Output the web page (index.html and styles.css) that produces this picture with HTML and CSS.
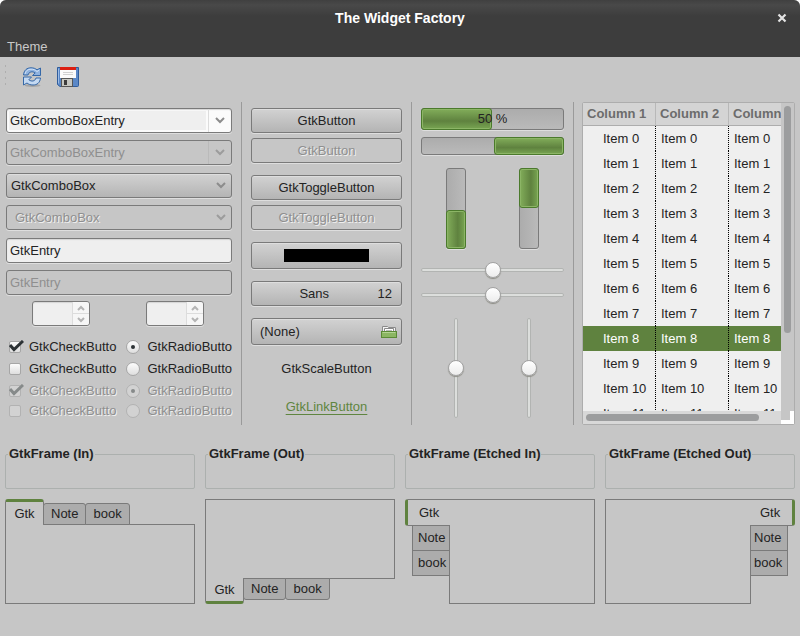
FILE: index.html
```html
<!DOCTYPE html>
<html lang="en">
<head>
<meta charset="utf-8">
<title>The Widget Factory</title>
<link rel="stylesheet" href="styles.css">
</head>
<body>
<div class="window">
  <header class="titlebar">
    <h1 class="title">The Widget Factory</h1>
    <button class="close" aria-label="Close"><svg width="10" height="10" viewBox="0 0 10 10"><path d="M1.500 1.500l7 7M8.500 1.500l-7 7" stroke="#e4e4e4" stroke-width="2.200" fill="none"/></svg></button>
  </header>
  <nav class="menubar"><button class="menu">Theme</button></nav>
  <div class="toolbar">
    <span class="grip"></span>
    <button class="tool" aria-label="Refresh">
      <svg width="24" height="24" viewBox="0 0 24 24">
        <ellipse cx="12.500" cy="20.500" rx="8" ry="1.500" fill="#a5a5a5"/>
        <path d="M3.500 10C4 5 7 2.800 11 2.800c2.600 0 4.400.7 6 2L20.500 3v7.500h-8l2.700-2.600C12.500 6 9 6.500 8 10z" fill="#8fb2df" stroke="#3568a8" stroke-linejoin="round"/>
        <path d="M20.500 13c-.5 4.800-3.500 7-7.500 7-2.600 0-4.400-.7-6-2l-3.500 2v-8h8L8.800 14.800C11.500 16.800 15 16.500 16 13z" fill="#c4d9f2" stroke="#3568a8" stroke-linejoin="round"/>
        <path d="M5 9C6 5.500 8 4.200 11 4.200c2.500 0 4.200.7 6 2.300l2-1.200" fill="none" stroke="#d3e3f6"/>
      </svg>
    </button>
    <button class="tool" aria-label="Save">
      <svg width="24" height="24" viewBox="0 0 24 24">
        <path d="M1.500 2.500h21v18q0 1-1 1H4l-2.500-2z" fill="#5b88c7" stroke="#2f5c9c"/>
        <path d="M2.500 3.500v15" stroke="#9bbbe5"/>
        <rect x="4" y="2" width="16" height="11" fill="#fafafa"/>
        <rect x="4" y="2" width="16" height="3" fill="#dc1f12"/>
        <path d="M7 7.500h10M7 9.500h10" stroke="#d0d0d0"/>
        <rect x="5.500" y="13.500" width="11" height="8" fill="#c6c7c2" stroke="#565656"/>
        <rect x="8" y="15" width="3" height="5" fill="#3c3c3c"/>
      </svg>
    </button>
  </div>

  <main class="widgets">
    <section class="col entries">
      <div class="pair">
        <div class="comboentry">
          <input class="comboentry-text" type="text" value="GtkComboBoxEntry" aria-label="Combo entry">
          <button class="comboentry-drop" aria-label="Open list"><svg class="chev" width="10" height="7" viewBox="0 0 10 7"><path d="M1 1l4 4 4-4"/></svg></button>
        </div>
        <div class="comboentry off">
          <input class="comboentry-text" type="text" value="GtkComboBoxEntry" aria-label="Disabled combo entry" disabled>
          <button class="comboentry-drop" aria-label="Open list" disabled><svg class="chev" width="10" height="7" viewBox="0 0 10 7"><path d="M1 1l4 4 4-4"/></svg></button>
        </div>
      </div>
      <div class="pair">
        <div class="combo">
          <select class="btn combo-select" aria-label="Combo box"><option>GtkComboBox</option></select>
          <svg class="chev combo-chev" width="10" height="7" viewBox="0 0 10 7"><path d="M1 1l4 4 4-4"/></svg>
        </div>
        <div class="combo off">
          <select class="btn combo-select" aria-label="Disabled combo box" disabled><option>GtkComboBox</option></select>
          <svg class="chev combo-chev" width="10" height="7" viewBox="0 0 10 7"><path d="M1 1l4 4 4-4"/></svg>
        </div>
      </div>
      <div class="pair">
        <input class="entry" type="text" value="GtkEntry" aria-label="Entry">
        <input class="entry" type="text" value="GtkEntry" aria-label="Disabled entry" disabled>
      </div>
      <div class="spins">
        <div class="spin">
          <input class="spin-text" type="text" aria-label="First number">
          <span class="spin-btns">
            <button class="spin-btn" aria-label="Increase"><svg class="chev" width="8" height="6" viewBox="0 0 8 6"><path d="M1 5l3-3 3 3"/></svg></button>
            <button class="spin-btn" aria-label="Decrease"><svg class="chev" width="8" height="6" viewBox="0 0 8 6"><path d="M1 1l3 3 3-3"/></svg></button>
          </span>
        </div>
        <div class="spin">
          <input class="spin-text" type="text" aria-label="Second number">
          <span class="spin-btns">
            <button class="spin-btn" aria-label="Increase"><svg class="chev" width="8" height="6" viewBox="0 0 8 6"><path d="M1 5l3-3 3 3"/></svg></button>
            <button class="spin-btn" aria-label="Decrease"><svg class="chev" width="8" height="6" viewBox="0 0 8 6"><path d="M1 1l3 3 3-3"/></svg></button>
          </span>
        </div>
      </div>
      <div class="choices">
        <label class="choice"><span class="mark"><input class="check" type="checkbox" checked><svg class="tick" width="15" height="12" viewBox="0 0 15 12"><path d="M1 5l4 4.500L14 1"/></svg></span><span>GtkCheckButto</span></label>
        <label class="choice"><span class="mark"><input class="radio" type="radio" name="r1" checked></span><span>GtkRadioButto</span></label>
        <label class="choice"><span class="mark"><input class="check" type="checkbox"></span><span>GtkCheckButto</span></label>
        <label class="choice"><span class="mark"><input class="radio" type="radio" name="r1"></span><span>GtkRadioButto</span></label>
        <label class="choice off"><span class="mark"><input class="check" type="checkbox" checked disabled><svg class="tick" width="15" height="12" viewBox="0 0 15 12"><path d="M1 5l4 4.500L14 1"/></svg></span><span>GtkCheckButto</span></label>
        <label class="choice off"><span class="mark"><input class="radio" type="radio" name="r2" checked disabled></span><span>GtkRadioButto</span></label>
        <label class="choice off"><span class="mark"><input class="check" type="checkbox" disabled></span><span>GtkCheckButto</span></label>
        <label class="choice off"><span class="mark"><input class="radio" type="radio" name="r2" disabled></span><span>GtkRadioButto</span></label>
      </div>
    </section>
    <div class="sep"></div>
    <section class="col buttons">
      <div class="stack">
        <button class="btn">GtkButton</button>
        <button class="btn" disabled>GtkButton</button>
      </div>
      <div class="stack">
        <button class="btn">GtkToggleButton</button>
        <button class="btn" disabled>GtkToggleButton</button>
      </div>
      <button class="btn tall" aria-label="Pick a color"><span class="swatch"></span></button>
      <button class="btn font-btn"><span class="font-name">Sans</span><span>12</span></button>
      <button class="btn tall file-btn"><span>(None)</span>
        <svg width="16" height="14" viewBox="0 0 16 14">
          <path d="M1.500 7V1.500h5l1 1h7V7" fill="#f4f4f4" stroke="#8a8a8a"/>
          <path d="M3.500 7V3.500h9V7" fill="#fff" stroke="#8a8a8a"/>
          <path d="M5 5.500h6" stroke="#bbb"/>
          <rect x=".5" y="6.500" width="15" height="6" fill="#8cb663" stroke="#5b8a36"/>
          <path d="M1.500 7.500h13" stroke="#b4d394"/>
        </svg>
      </button>
      <button class="flat">GtkScaleButton</button>
      <a class="link" href="#">GtkLinkButton</a>
    </section>
    <div class="sep"></div>
    <section class="col meters">
      <div class="bar" role="progressbar" aria-valuenow="50" aria-label="Progress"><span class="fill"></span><span class="bar-text">50 %</span></div>
      <div class="bar slim reverse" role="progressbar" aria-valuenow="50" aria-label="Reverse progress"><span class="fill"></span></div>
      <div class="vbars">
        <div class="bar vert reverse" role="progressbar" aria-valuenow="50" aria-label="Upward progress"><span class="fill"></span></div>
        <div class="bar vert" role="progressbar" aria-valuenow="50" aria-label="Downward progress"><span class="fill"></span></div>
      </div>
      <div class="hscales">
        <input class="scale" type="range" aria-label="Horizontal scale">
        <input class="scale" type="range" aria-label="Inverted horizontal scale">
      </div>
      <div class="vscales">
        <input class="scale vscale" type="range" aria-label="Vertical scale">
        <input class="scale vscale" type="range" aria-label="Inverted vertical scale">
      </div>
    </section>
    <div class="sep"></div>
    <section class="tree">
      <div class="view">
        <table class="items">
          <thead><tr><th>Column 1</th><th>Column 2</th><th>Column 3</th></tr></thead>
          <tbody>
            <tr><td>Item 0</td><td>Item 0</td><td>Item 0</td></tr>
            <tr><td>Item 1</td><td>Item 1</td><td>Item 1</td></tr>
            <tr><td>Item 2</td><td>Item 2</td><td>Item 2</td></tr>
            <tr><td>Item 3</td><td>Item 3</td><td>Item 3</td></tr>
            <tr><td>Item 4</td><td>Item 4</td><td>Item 4</td></tr>
            <tr><td>Item 5</td><td>Item 5</td><td>Item 5</td></tr>
            <tr><td>Item 6</td><td>Item 6</td><td>Item 6</td></tr>
            <tr><td>Item 7</td><td>Item 7</td><td>Item 7</td></tr>
            <tr class="selected"><td>Item 8</td><td>Item 8</td><td>Item 8</td></tr>
            <tr><td>Item 9</td><td>Item 9</td><td>Item 9</td></tr>
            <tr><td>Item 10</td><td>Item 10</td><td>Item 10</td></tr>
            <tr><td>Item 11</td><td>Item 11</td><td>Item 11</td></tr>
          </tbody>
        </table>
      </div>
      <div class="vtrack"><span class="vthumb"></span></div>
      <div class="htrack"><span class="hthumb"></span></div>
      <div class="corner"></div>
    </section>
  </main>

  <section class="frames">
    <fieldset class="frame"><legend>GtkFrame (In)</legend></fieldset>
    <fieldset class="frame"><legend>GtkFrame (Out)</legend></fieldset>
    <fieldset class="frame"><legend>GtkFrame (Etched In)</legend></fieldset>
    <fieldset class="frame"><legend>GtkFrame (Etched Out)</legend></fieldset>
  </section>

  <section class="books">
    <div class="book top">
      <div class="tabs" role="tablist"><button class="tab active" role="tab">Gtk</button><button class="tab" role="tab">Note</button><button class="tab" role="tab">book</button></div>
      <div class="page"></div>
    </div>
    <div class="book bottom">
      <div class="tabs" role="tablist"><button class="tab active" role="tab">Gtk</button><button class="tab" role="tab">Note</button><button class="tab" role="tab">book</button></div>
      <div class="page"></div>
    </div>
    <div class="book left">
      <div class="tabs" role="tablist"><button class="tab active" role="tab">Gtk</button><button class="tab" role="tab">Note</button><button class="tab" role="tab">book</button></div>
      <div class="page"></div>
    </div>
    <div class="book right">
      <div class="tabs" role="tablist"><button class="tab active" role="tab">Gtk</button><button class="tab" role="tab">Note</button><button class="tab" role="tab">book</button></div>
      <div class="page"></div>
    </div>
  </section>
</div>
</body>
</html>
```
FILE: styles.css
```css
* { box-sizing: border-box; }

:root {
  --bg: #c6c6c6;
  --base: #efefef;
  --line: #7a7a7a;
  --green: #5f823f;
  --text: #232323;
  --dim: #8f8f8f;
}

body {
  margin: 0;
  background: #fff;
  color: var(--text);
  font: 13px/16px "Liberation Sans", Arial, sans-serif;
}

button, input, select {
  margin: 0;
  padding: 0;
  border: 0;
  background: none;
  color: inherit;
  font: inherit;
}

.window {
  min-height: 100vh;
  overflow: hidden;
  border-radius: 6px 6px 0 0;
  background: var(--bg);
}

/* title, menu and tool bars */
.titlebar {
  display: flex;
  align-items: center;
  height: 36px;
  padding-left: 36px;
  background: linear-gradient(#404040, #494949 5px, #3d3d3d 16px);
}
.title { flex: 1; margin: 0; color: #fff; font-size: 14px; line-height: 16px; text-align: center; }
.close { display: flex; justify-content: center; width: 36px; }
.menubar { height: 21px; padding: 3px 7px 0; background: #3d3d3d; color: #c9c9c9; }
.menu { display: block; }
.toolbar { display: flex; align-items: center; height: 40px; padding: 0 5px; }
.grip {
  width: 1px;
  height: 24px;
  margin-right: 14px;
  background: repeating-linear-gradient(#aeaeae 0 2px, transparent 2px 6px);
}
.tool { display: flex; margin-right: 12px; }

/* main columns */
.widgets {
  display: grid;
  grid-template-columns: 226fr 1px 151fr 1px 143fr 1px 212fr;
  column-gap: 9px;
  padding: 5px 5px 0 6px;
}
.widgets > * { min-width: 0; }
.sep { background: #9a9a9a; }
.col { display: flex; flex-direction: column; padding: 6px 0 0; }

.btn {
  display: block;
  width: 100%;
  height: 25px;
  border: 1px solid var(--line);
  border-radius: 3px;
  background: linear-gradient(#d2d2d2, #b4b4b4);
  box-shadow: inset 0 1px 0 #dedede, 0 1px 0 #dedede;
}
.btn:disabled {
  background: var(--bg);
  box-shadow: 0 1px 0 #dedede;
  color: var(--dim);
  text-shadow: 1px 1px 0 #efefef;
  opacity: 1;
}
.chev { display: block; fill: none; stroke: #8c8c8c; stroke-width: 2; }
.off .chev { stroke: #9c9c9c; }

/* text entries and combo boxes */
.entries { gap: 8px; }
.pair { display: grid; gap: 7px; }
.comboentry, .entry, .spin {
  height: 25px;
  border: 1px solid var(--line);
  border-radius: 3px;
  background: var(--base);
  box-shadow: inset 0 1px 1px #d4d4d4, 0 1px 0 #dedede;
}
.comboentry { display: flex; background: #fbfbfb; }
.comboentry-text { flex: 1; min-width: 0; margin: 2px; padding: 0 1px; background: var(--base); }
.comboentry-drop { display: flex; align-items: center; justify-content: center; width: 23px; border-left: 1px solid #dcdcdc; }
.comboentry.off, .entry:disabled { background: var(--bg); box-shadow: 0 1px 0 #dedede; color: var(--dim); }
.off .comboentry-text { background: var(--bg); }
.off .comboentry-drop { border-left-color: #bababa; }
.entry { width: 100%; padding: 0 3px; }
.combo { position: relative; }
.combo-select { appearance: none; padding: 0 4px; }
.off .combo-select { padding-left: 8px; }
.combo-chev { position: absolute; right: 6px; top: 9px; pointer-events: none; }

.spins { display: grid; grid-template-columns: 1fr 1fr; column-gap: 4px; justify-items: center; margin: -2px 2px 0 0; }
.spin { display: flex; width: 58px; }
.spin-text { flex: 1; min-width: 0; }
.spin-btns { display: grid; width: 17px; border-left: 1px solid #dcdcdc; background: #f6f6f6; border-radius: 0 3px 3px 0; }
.spin-btn { display: flex; align-items: center; justify-content: center; }
.spin-btn + .spin-btn { border-top: 1px solid #dcdcdc; }
.spin .chev { stroke: #b4b4b4; }

/* check and radio buttons */
.choices {
  display: grid;
  grid-template-columns: 113fr 107fr;
  grid-template-rows: 22px 22px 22px 18px;
  column-gap: 6px;
  align-items: center;
  margin-top: 2px;
}
.choice { display: flex; min-width: 0; gap: 6px; white-space: nowrap; }
.mark { position: relative; display: flex; align-items: center; justify-content: center; width: 17px; height: 16px; }
.check, .radio {
  appearance: none;
  width: 12px;
  height: 12px;
  border: 1px solid #a6a6a6;
  border-radius: 2px;
  background: linear-gradient(#fcfcfc, #dedede);
}
.radio { display: grid; place-items: center; width: 14px; height: 14px; border-radius: 50%; }
.radio:checked::after { content: ""; width: 4px; height: 4px; border-radius: 50%; background: #2c3235; }
.tick { position: absolute; left: 3px; top: 1px; fill: none; stroke: #2c3235; stroke-width: 3; pointer-events: none; }
.off { color: var(--dim); }
.choice.off { text-shadow: 1px 1px 0 #efefef; }
.choice.off .check, .choice.off .radio { border-color: #b2b2b2; background: #d2d2d2; }
.off .tick { stroke: #868a8a; }
.off .radio:checked::after { background: #868a8a; }

/* button column */
.buttons { gap: 12px; }
.stack { display: grid; gap: 5px; }
.btn.tall { height: 27px; }
.swatch { display: block; width: 85px; height: 13px; margin: 0 auto; background: #000; }
.font-btn, .file-btn { display: flex; align-items: center; padding: 0 9px; }
.font-name { flex: 1; padding-right: 10px; }
.file-btn { justify-content: space-between; padding: 0 4px 0 8px; }
.flat { align-self: center; height: 24px; }
.link { align-self: center; margin-top: 6px; color: #5f8540; text-underline-offset: 3px; }

/* progress bars and scales */
.bar {
  position: relative;
  display: flex;
  height: 22px;
  border: 1px solid var(--line);
  border-radius: 3px;
  background: linear-gradient(#acacac, #bababa);
  box-shadow: 0 1px 0 #dedede;
}
.fill {
  width: 50%;
  margin: -1px;
  border: 1px solid #4b7a2c;
  border-radius: 3px;
  background: linear-gradient(#82ad5a, #5f823f 60%, #78a552);
  box-shadow: inset 0 0 0 1px #8cb566;
}
.reverse { justify-content: flex-end; }
.bar-text { position: absolute; inset: 2px 0 0; text-align: center; }
.slim { height: 18px; margin-top: 7px; }
.vbars, .vscales { display: grid; grid-template-columns: 1fr 1fr; column-gap: 4px; justify-items: center; }
.vbars { margin-top: 13px; }
.bar.vert { flex-direction: column; width: 20px; height: 81px; background: linear-gradient(90deg, #acacac, #bababa); }
.vert .fill { width: auto; height: 50%; background: linear-gradient(90deg, #82ad5a, #5f823f 60%, #78a552); }
.hscales { display: grid; gap: 9px; margin-top: 13px; }
.vscales { margin-top: 15px; }
.scale { appearance: none; width: 100%; height: 16px; }
.scale::-webkit-slider-runnable-track {
  height: 4px;
  border: 1px solid #b2b4b2;
  border-radius: 2px;
  background: #dcdedc;
}
.scale::-webkit-slider-thumb {
  appearance: none;
  width: 16px;
  height: 16px;
  margin-top: -7px;
  border: 1px solid #a2a2a2;
  border-radius: 50%;
  background: linear-gradient(#fff, #ececec);
  box-shadow: 0 1px 1px #8c8c84;
}
.vscale { writing-mode: vertical-lr; width: 16px; height: 100px; }
.vscale::-webkit-slider-runnable-track { width: 4px; height: 100%; }
.vscale::-webkit-slider-thumb { margin: 0 0 0 -7px; }

/* tree view */
.tree {
  display: grid;
  grid-template-columns: minmax(0, 1fr) 13px;
  grid-template-rows: minmax(0, 1fr) 13px;
  margin-left: -1px;
  border: 1px solid #adadad;
  border-radius: 2px;
  background: var(--base);
}
.view { height: 308px; overflow: hidden; }
.items { width: 219px; border-collapse: separate; border-spacing: 0; table-layout: fixed; }
.items th {
  height: 23px;
  padding: 0 4px;
  border-right: 1px solid #b8b8b8;
  border-bottom: 1px solid #adadad;
  background: #d4d4d4;
  color: #6c6c6c;
  text-align: left;
  white-space: nowrap;
}
.items td {
  height: 25px;
  padding: 0 5px;
  background: repeating-linear-gradient(#000 0 1px, transparent 1px 2px) right / 1px 100% no-repeat;
  white-space: nowrap;
}
.items td:first-child { padding-left: 20px; }
.selected { background-color: var(--green); color: #fff; }
.vtrack { padding: 3px 3px 0; background: var(--bg); }
.vthumb { display: block; width: 7px; height: 227px; border-radius: 4px; background: #9c9d9e; }
.htrack { padding: 3px; background: #d8d8d8; }
.hthumb { display: block; width: 90%; height: 7px; border-radius: 4px; background: #9c9d9e; }
.corner { border: solid #fff; border-width: 0 4px 4px 0; background: var(--bg); }

/* frames and notebooks */
.frames, .books { display: grid; grid-template-columns: repeat(4, minmax(0, 1fr)); column-gap: 10px; padding: 0 5px; }
.frames { margin-top: 21px; }
.frame { height: 43px; min-width: 0; margin: 0; padding: 0 2px; border: 1px solid #acb0ae; border-radius: 2px; }
.frame legend { padding: 0 1px; font-weight: bold; white-space: nowrap; }
.books { margin-top: 10px; padding-bottom: 32px; }

.book { display: flex; flex-direction: column; height: 105px; }
.page { flex: 1; min-width: 0; border: 1px solid var(--line); }
.tabs { display: flex; position: relative; z-index: 1; }
.tab { height: 22px; padding: 0 7px; border: 1px solid var(--line); background: #acacac; }
.tab + .tab { margin-left: -1px; }
.tab.active { width: 39px; padding: 0 8px; background: var(--bg); }

.top .tabs { align-items: flex-end; margin-bottom: -1px; }
.top .tab { border-radius: 3px 3px 0 0; }
.top .active { height: 26px; border-top: 3px solid var(--green); border-bottom: 0; }
.bottom { flex-direction: column-reverse; }
.bottom .tabs { align-items: flex-start; margin-top: -1px; }
.bottom .tab { border-radius: 0 0 3px 3px; }
.bottom .active { height: 26px; border-top: 0; border-bottom: 3px solid var(--green); }

.left { flex-direction: row; }
.right { flex-direction: row-reverse; }
.left .tabs, .right .tabs { flex-direction: column; }
.left .tabs { align-items: flex-end; margin-right: -1px; }
.right .tabs { align-items: flex-start; margin-left: -1px; }
.left .tab, .right .tab { width: 38px; height: 26px; padding: 0 5px; text-align: left; }
.right .tab { padding: 0 3px; }
.left .tab + .tab, .right .tab + .tab { margin: -1px 0 0; }
.left .tab.active, .right .tab.active { width: 45px; height: 27px; }
.left .tab.active { padding-left: 11px; border-left: 3px solid var(--green); border-right: 0; border-radius: 3px 0 0 3px; }
.right .tab.active { padding-left: 10px; border-right: 3px solid var(--green); border-left: 0; border-radius: 0 3px 3px 0; }
```
